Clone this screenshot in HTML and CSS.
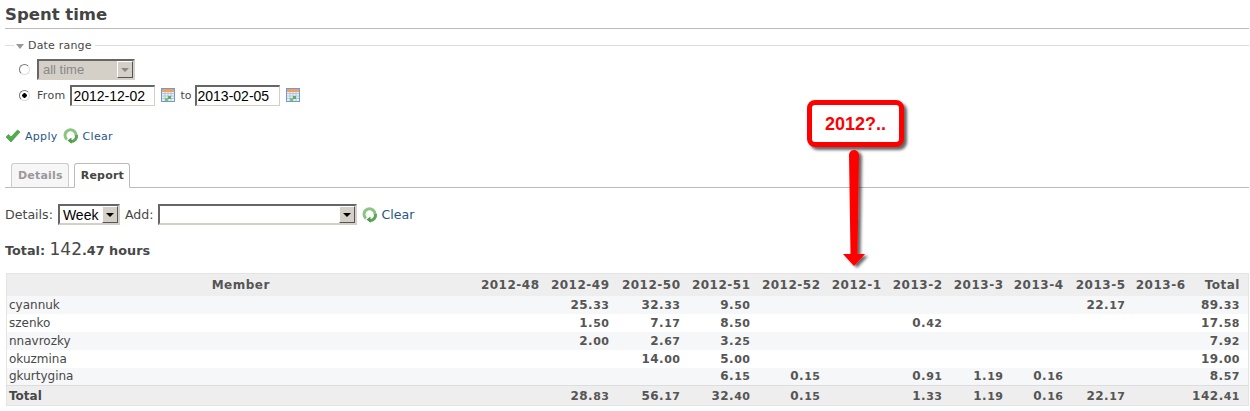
FILE: index.html
```html
<!DOCTYPE html>
<html lang="en">
<head>
    <meta charset="UTF-8">
    <title>Spent time</title>
    <link rel="stylesheet" href="styles.css">
</head>
<body>
    <svg class="icon-defs" width="0" height="0">
        <defs>
            <symbol id="icon-cal" viewBox="0 0 16 16">
                <rect x="1.500" y="1.500" width="13" height="13" fill="#e8eff8" stroke="#6f9bd0"/>
                <rect x="2" y="2" width="12" height="3" fill="#f0a060"/>
                <path d="M2 6.500h12M2 9h12M2 11.500h12M5 5v9M8 5v9M11 5v9" stroke="#b9c6d6" fill="none"/>
                <rect x="8" y="9" width="3" height="3" fill="#5fae5f"/>
                <rect x="5" y="11" width="3" height="3" fill="#7cc07c"/>
            </symbol>
            <symbol id="icon-reload" viewBox="0 0 16 16">
                <path d="M4 11.500A5.500 5.500 0 1 1 13 8" fill="none" stroke="#8cc583" stroke-width="3"/>
                <path d="M13.500 7a5.500 5.500 0 0 1-6 6.500" fill="none" stroke="#5da456" stroke-width="3"/>
                <path d="M8.500 9.500v6.300l-4-3.200z" fill="#4f9a49"/>
                <circle cx="8" cy="8" r="1.800" fill="#fff"/>
            </symbol>
        </defs>
    </svg>

    <h2 class="page-title">Spent time</h2>

    <fieldset class="date-range">
        <legend><span class="legend-arrow"></span>Date range</legend>
        <div class="range-row">
            <input type="radio" name="period" class="radio">
            <div class="combo combo-disabled combo-period">
                <span class="combo-text">all time</span>
                <span class="combo-btn"></span>
            </div>
        </div>
        <div class="range-row range-row-dates">
            <input type="radio" name="period" class="radio" checked>
            <span class="from-label">From</span>
            <input type="text" class="date-input" value="2012-12-02">
            <svg class="cal-icon" width="16" height="16"><use href="#icon-cal"/></svg>
            <span class="to-label">to</span>
            <input type="text" class="date-input" value="2013-02-05">
            <svg class="cal-icon" width="16" height="16"><use href="#icon-cal"/></svg>
        </div>
    </fieldset>

    <p class="buttons">
        <svg class="action-icon" width="16" height="16" viewBox="0 0 16 16"><path d="M1 9l2.500-2.500 2.500 2.500 6.500-7 2.500 2-9 10z" fill="#4fae4a" stroke="#3a8f3a" stroke-width=".6"/></svg>
        <a href="#" class="link link-apply">Apply</a>
        <svg class="action-icon" width="16" height="16"><use href="#icon-reload"/></svg>
        <a href="#" class="link">Clear</a>
    </p>

    <div class="tabs">
        <a href="#" class="tab">Details</a>
        <a href="#" class="tab tab-selected">Report</a>
    </div>

    <div class="report-options">
        <span>Details:</span>
        <div class="combo combo-week">
            <span class="combo-text">Week</span>
            <span class="combo-btn"></span>
        </div>
        <span>Add:</span>
        <div class="combo combo-add">
            <span class="combo-text"></span>
            <span class="combo-btn"></span>
        </div>
        <svg class="action-icon" width="16" height="16"><use href="#icon-reload"/></svg>
        <a href="#" class="link">Clear</a>
    </div>

    <p class="total-line">Total: <span class="total-int">142</span>.47 hours</p>

    <table class="report">
        <thead>
            <tr>
                <th class="member">Member</th>
                <th>2012-48</th>
                <th>2012-49</th>
                <th>2012-50</th>
                <th>2012-51</th>
                <th>2012-52</th>
                <th>2012-1</th>
                <th>2013-2</th>
                <th>2013-3</th>
                <th>2013-4</th>
                <th>2013-5</th>
                <th>2013-6</th>
                <th>Total</th>
            </tr>
        </thead>
        <tbody>
            <tr class="odd">
                <td>cyannuk</td><td></td><td>25.<i>33</i></td><td>32.<i>33</i></td><td>9.<i>50</i></td><td></td><td></td><td></td><td></td><td></td><td>22.<i>17</i></td><td></td><td>89.<i>33</i></td>
            </tr>
            <tr>
                <td>szenko</td><td></td><td>1.<i>50</i></td><td>7.<i>17</i></td><td>8.<i>50</i></td><td></td><td></td><td>0.<i>42</i></td><td></td><td></td><td></td><td></td><td>17.<i>58</i></td>
            </tr>
            <tr class="odd">
                <td>nnavrozky</td><td></td><td>2.<i>00</i></td><td>2.<i>67</i></td><td>3.<i>25</i></td><td></td><td></td><td></td><td></td><td></td><td></td><td></td><td>7.<i>92</i></td>
            </tr>
            <tr>
                <td>okuzmina</td><td></td><td></td><td>14.<i>00</i></td><td>5.<i>00</i></td><td></td><td></td><td></td><td></td><td></td><td></td><td></td><td>19.<i>00</i></td>
            </tr>
            <tr class="odd">
                <td>gkurtygina</td><td></td><td></td><td></td><td>6.<i>15</i></td><td>0.<i>15</i></td><td></td><td>0.<i>91</i></td><td>1.<i>19</i></td><td>0.<i>16</i></td><td></td><td></td><td>8.<i>57</i></td>
            </tr>
            <tr class="total-row">
                <td>Total</td><td></td><td>28.<i>83</i></td><td>56.<i>17</i></td><td>32.<i>40</i></td><td>0.<i>15</i></td><td></td><td>1.<i>33</i></td><td>1.<i>19</i></td><td>0.<i>16</i></td><td>22.<i>17</i></td><td></td><td>142.<i>41</i></td>
            </tr>
        </tbody>
    </table>

    <!-- annotation pasted over the screenshot -->
    <div class="callout">2012?..</div>
    <svg class="callout-arrow" width="40" height="125" viewBox="0 0 40 125">
        <defs>
            <filter id="arrow-shadow" x="-30%" y="-10%" width="170%" height="120%">
                <feDropShadow dx="3" dy="2" stdDeviation="1.500" flood-color="#000" flood-opacity=".6"/>
            </filter>
        </defs>
        <path d="M10 5a5 5 0 0 1 10 0l-1.500 99h7.500l-11 12-11-12h7.500z" fill="#f00" filter="url(#arrow-shadow)"/>
    </svg>
</body>
</html>
```

FILE: styles.css
```css
body {
    font-family: "DejaVu Sans", Verdana, sans-serif;
    font-size: 12px;
    color: #484848;
    margin: 0;
    padding: 0 1px 0 5px;
    height: 411px;
    overflow: hidden;
    background-color: #fff;
}
a {
    text-decoration: none;
}
.icon-defs {
    position: absolute;
}
.page-title {
    font-size: 16.5px;
    line-height: 22px;
    font-weight: bold;
    color: #444;
    margin: 0;
    padding: 4px 0 2px;
    border-bottom: 1px solid #bbb;
}

/* date range filter */
.date-range {
    border: none;
    border-top: 1px solid #ddd;
    margin: 10px 0 0;
    padding: 6px 0 0 13px;
    min-width: 0;
}
.date-range legend {
    padding: 0 3px 0 2px;
    margin-left: -4px;
    font-size: 11px;
    line-height: 13px;
    letter-spacing: .2px;
}
.legend-arrow {
    display: inline-block;
    width: 0;
    height: 0;
    border-left: 4px solid transparent;
    border-right: 4px solid transparent;
    border-top: 5px solid #999;
    margin-right: 4px;
    vertical-align: 0;
}
.range-row {
    display: flex;
    align-items: center;
    height: 22px;
}
.range-row-dates {
    height: 22px;
    margin-top: 4px;
}
.radio {
    appearance: none;
    width: 11px;
    height: 11px;
    margin: 0 7px 0 1px;
    border: 1px solid #777;
    border-right-color: #ddd;
    border-bottom-color: #ddd;
    border-radius: 50%;
    background: #fff;
}
.radio:checked {
    background: radial-gradient(circle, #000 0, #000 2px, #fff 2.500px);
}
.from-label {
    font-size: 11px;
    letter-spacing: .3px;
    margin-right: 5px;
}
.to-label {
    font-size: 11px;
    margin: 0 3px 0 4px;
}
.date-input {
    box-sizing: border-box;
    width: 85px;
    height: 21px;
    padding: 0 1px;
    font-family: "Liberation Sans", Arial, sans-serif;
    font-size: 14px;
    color: #000;
    border-style: solid;
    border-width: 2px 1px 1px 2px;
    border-color: #666 #d4d0c8 #d4d0c8 #666;
    background: #fff;
}
.cal-icon {
    margin-left: 5px;
}

/* windows classic style combo box */
.combo {
    box-sizing: border-box;
    display: flex;
    justify-content: space-between;
    align-items: center;
    height: 21px;
    border: 2px solid #666;
    border-right-color: #d4d0c8;
    border-bottom-color: #d4d0c8;
    background: #fff;
    font-family: "Liberation Sans", Arial, sans-serif;
    font-size: 13px;
    color: #000;
}
.combo-text {
    padding-left: 1px;
}
.combo-btn {
    position: relative;
    box-sizing: border-box;
    width: 16px;
    height: 17px;
    flex: none;
    background: #d4d0c8;
    border: 1px solid #fff;
    border-right-color: #555;
    border-bottom-color: #555;
}
.combo-btn:after {
    content: "";
    position: absolute;
    left: 3px;
    top: 6px;
    border-left: 4px solid transparent;
    border-right: 4px solid transparent;
    border-top: 4px solid #000;
}
.combo-disabled {
    background: #d4d0c8;
    color: #888;
}
.combo-disabled .combo-btn:after {
    border-top-color: #888;
}
.combo-period {
    width: 98px;
}
.combo-period .combo-text {
    padding-left: 4px;
    font-size: 13px;
}
.combo-week {
    width: 62px;
}
.combo-week .combo-text {
    font-size: 14px;
    padding-left: 3px;
}
.combo-add {
    width: 199px;
}

.buttons {
    display: flex;
    align-items: center;
    margin: 22px 0 0;
    height: 16px;
    font-size: 11px;
}
.link {
    color: #2a5685;
    letter-spacing: .3px;
}
.link-apply {
    margin: 0 5px 0 0;
}
.buttons .action-icon {
    margin-right: 4px;
}

/* tabs */
.tabs {
    display: flex;
    gap: 5px;
    margin-top: 19px;
    padding-left: 6px;
    height: 24px;
    border-bottom: 1px solid #bbb;
}
.tab {
    box-sizing: border-box;
    height: 25px;
    padding: 0 5px 0 6px;
    font-size: 11px;
    font-weight: bold;
    line-height: 24px;
    letter-spacing: .2px;
    color: #999;
    background: #f6f6f6;
    border: 1px solid #ccc;
    border-bottom-color: #bbb;
    border-radius: 3px 3px 0 0;
}
.tab-selected {
    color: #444;
    background: #fff;
    border-color: #bbb;
    border-bottom-color: #fff;
}

.report-options {
    display: flex;
    align-items: center;
    margin-top: 16px;
    height: 21px;
    font-size: 12.6px;
    gap: 5px;
}
.report-options .combo-add {
    margin-left: -1px;
}
.report-options .link {
    margin-left: -1px;
    letter-spacing: 0;
}
.total-line {
    margin: 14px 0 0;
    font-size: 12.8px;
    font-weight: bold;
    line-height: 20px;
}
.total-int {
    font-size: 17px;
    font-weight: normal;
}

/* report table */
.report {
    table-layout: fixed;
    width: 1243px;
    margin: 12px 0 0 1px;
    border-collapse: collapse;
    border: 1px solid #e4e4e4;
}
.report th,
.report td {
    box-sizing: border-box;
}
.report th {
    height: 22px;
    padding: 0 4px 0 0;
    background: #eee;
    font-size: 12px;
    letter-spacing: .5px;
    text-align: right;
    color: #555;
}
.report th.member {
    width: 472px;
    text-align: center;
}
.report th:nth-child(2) { width: 65px; }
.report th:nth-child(3) { width: 70px; }
.report th:nth-child(4) { width: 71px; }
.report th:nth-child(5) { width: 70px; }
.report th:nth-child(6) { width: 70px; }
.report th:nth-child(7) { width: 61px; }
.report th:nth-child(8) { width: 61px; }
.report th:nth-child(9) { width: 61px; }
.report th:nth-child(10) { width: 60px; }
.report th:nth-child(11) { width: 62px; }
.report th:nth-child(12) { width: 60px; }
.report th:last-child,
.report td:last-child {
    padding-right: 8px;
}
.report td {
    height: 18px;
    padding: 0 4px 0 0;
    text-align: right;
    font-weight: bold;
    letter-spacing: .5px;
    color: #555;
}
.report td:first-child {
    padding-left: 2px;
    text-align: left;
    font-weight: normal;
    letter-spacing: 0;
    color: #484848;
}
.report i {
    font-style: normal;
    font-size: 11px;
}
.report .odd td {
    background: #f6f7f8;
}
.report .total-row td {
    height: 20px;
    background: #eee;
    border-top: 1px solid #ddd;
}
.report .total-row td:first-child {
    font-weight: bold;
    color: #484848;
}

/* annotation */
.callout {
    position: absolute;
    left: 807px;
    top: 100px;
    box-sizing: border-box;
    width: 97px;
    height: 47px;
    border: 5px solid #f00;
    border-radius: 8px;
    background: #fff;
    box-shadow: 3px 3px 3px rgba(0, 0, 0, .6);
    font-family: "Liberation Sans", Arial, sans-serif;
    font-size: 18px;
    font-weight: bold;
    line-height: 39px;
    text-align: center;
    color: #f00;
}
.callout-arrow {
    position: absolute;
    left: 839px;
    top: 150px;
}
```
